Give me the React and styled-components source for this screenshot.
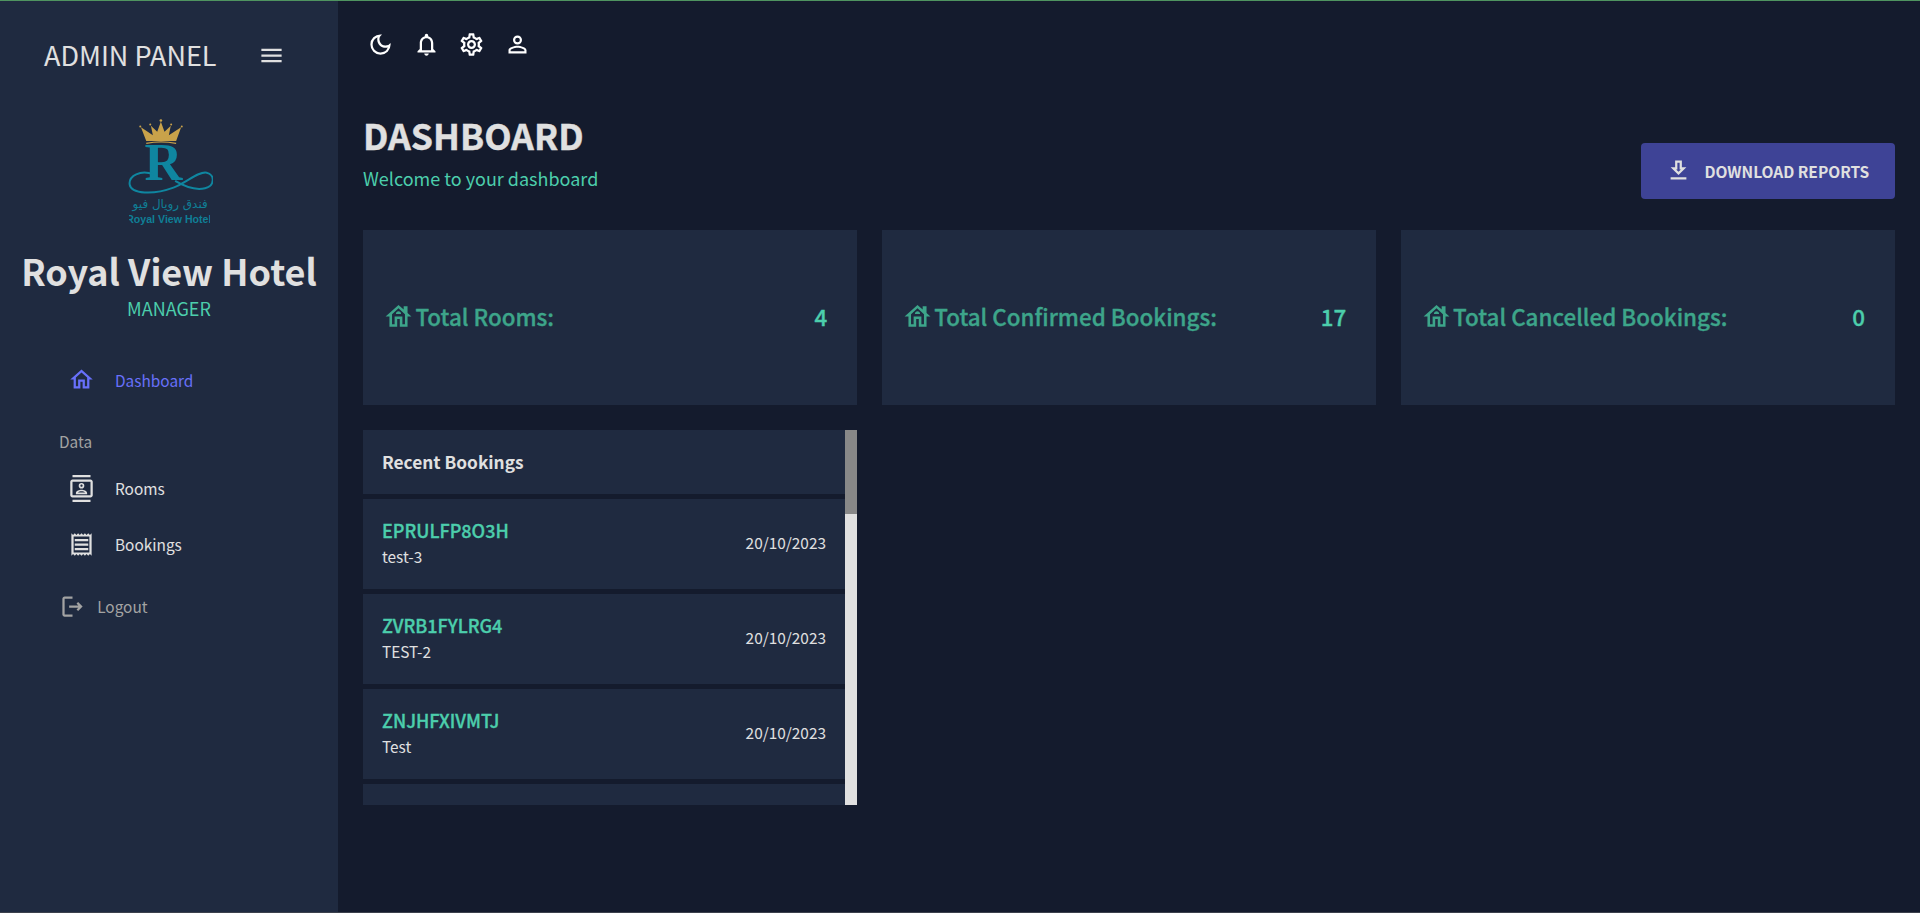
import styled, { createGlobalStyle } from "styled-components";
import {
  MdOutlineMenu,
  MdOutlineHome,
  MdOutlineContacts,
  MdOutlineReceipt,
  MdOutlineLogout,
  MdOutlineDarkMode,
  MdOutlineNotifications,
  MdOutlineSettings,
  MdOutlinePersonOutline,
  MdOutlineDownload,
  MdOutlineHouse,
} from "react-icons/md";

const GlobalStyle = createGlobalStyle`
  * { box-sizing: border-box; }
  html, body { margin: 0; padding: 0; height: 100%; background: #141b2d; }
  body {
    font-family: "Noto Sans CJK SC", "Noto Sans", sans-serif;
    color: #e0e0e0;
    overflow: hidden;
  }
`;

const stats = [
  { label: "Total Rooms:", value: "4" },
  { label: "Total Confirmed Bookings:", value: "17" },
  { label: "Total Cancelled Bookings:", value: "0" },
];

const bookings = [
  { code: "EPRULFP8O3H", name: "test-3", date: "20/10/2023" },
  { code: "ZVRB1FYLRG4", name: "TEST-2", date: "20/10/2023" },
  { code: "ZNJHFXIVMTJ", name: "Test", date: "20/10/2023" },
  { code: "", name: "", date: "" },
];

function Logo() {
  return (
    <svg width="88" height="108" viewBox="44 24 265 324">
      <defs>
        <clipPath id="logo-latin">
          <rect x="56" y="310" width="244" height="36" />
        </clipPath>
      </defs>
      <g fill="#c9a24a">
        <path d="M92 48 L128 72 L122 44 L141 62 L152 32 L163 62 L182 44 L176 72 L213 48 L198 90 L108 90 Z" />
        <circle cx="152" cy="28" r="4" />
        <circle cx="120" cy="40" r="3" />
        <circle cx="183" cy="40" r="3" />
        <circle cx="90" cy="46" r="3" />
        <circle cx="215" cy="46" r="3" />
      </g>
      <path d="M108 97 Q152 88 198 97" fill="none" stroke="#c9a24a" strokeWidth="4" />
      <text x="160" y="208" textAnchor="middle" fontFamily="Liberation Serif" fontWeight="700" fontSize="158" fill="#0f86a0">R</text>
      <path d="M130 190 C90 175 55 195 58 220 C62 250 130 252 190 230 C230 215 265 180 290 185 C315 190 315 225 285 232 C250 240 220 225 195 210" fill="none" stroke="#0f86a0" strokeWidth="6" />
      <text x="180" y="290" textAnchor="middle" fontFamily="DejaVu Sans" fontSize="36" fill="#0f7f96" direction="rtl">فندق رويال فيو</text>
      <g clipPath="url(#logo-latin)">
        <text x="176" y="338" textAnchor="middle" fontFamily="Liberation Sans" fontWeight="700" fontSize="32" fill="#0f7f96">Royal View Hotel</text>
      </g>
    </svg>
  );
}

export default function App() {
  return (
    <>
      <GlobalStyle />
      <Page>
        <Sidebar>
          <Brand>
            <BrandName>ADMIN PANEL</BrandName>
            <MdOutlineMenu size={27} color="#e0e0e0" />
          </Brand>
          <LogoBox>
            <Logo />
          </LogoBox>
          <HotelName>Royal View Hotel</HotelName>
          <Role>MANAGER</Role>
          <Nav>
            <NavItem $active>
              <MdOutlineHome size={27} />
              <span>Dashboard</span>
            </NavItem>
            <NavGroup>Data</NavGroup>
            <NavItem>
              <MdOutlineContacts size={27} />
              <span>Rooms</span>
            </NavItem>
            <NavItem>
              <MdOutlineReceipt size={27} />
              <span>Bookings</span>
            </NavItem>
            <LogoutRow>
              <MdOutlineLogout size={27} />
              <span>Logout</span>
            </LogoutRow>
          </Nav>
        </Sidebar>
        <Main>
          <TopBar>
            <TopIcon><MdOutlineDarkMode size={27} /></TopIcon>
            <TopIcon><MdOutlineNotifications size={27} /></TopIcon>
            <TopIcon><MdOutlineSettings size={27} /></TopIcon>
            <TopIcon><MdOutlinePersonOutline size={27} /></TopIcon>
          </TopBar>
          <Heading>
            <HeadingText>
              <Title>DASHBOARD</Title>
              <Subtitle>Welcome to your dashboard</Subtitle>
            </HeadingText>
            <DownloadButton>
              <MdOutlineDownload size={27} />
              DOWNLOAD REPORTS
            </DownloadButton>
          </Heading>
          <Cards>
            {stats.map((s) => (
              <Card key={s.label}>
                <CardLabel>
                  <MdOutlineHouse size={31} />
                  {s.label}
                </CardLabel>
                <CardValue>{s.value}</CardValue>
              </Card>
            ))}
          </Cards>
          <Recent>
            <RecentHeader>Recent Bookings</RecentHeader>
            {bookings.map((b, i) => (
              <BookingRow key={i}>
                <div>
                  <BookingCode>{b.code}</BookingCode>
                  <BookingName>{b.name}</BookingName>
                </div>
                <BookingDate>{b.date}</BookingDate>
              </BookingRow>
            ))}
            <ScrollTrack>
              <ScrollThumb />
            </ScrollTrack>
          </Recent>
        </Main>
      </Page>
    </>
  );
}

const Page = styled.div`
  display: flex;
  height: 100vh;
  border-top: 1px solid #4f9460;
  border-bottom: 1px solid #3c414d;
  background: #141b2d;
`;

const Sidebar = styled.aside`
  width: 338px;
  flex-shrink: 0;
  background: #1f2a40;
  display: flex;
  flex-direction: column;
`;

const Brand = styled.div`
  display: flex;
  align-items: center;
  height: 38px;
  margin-top: 35px;
  padding-left: 44px;
  gap: 41.5px;
`;

const BrandName = styled.div`
  font-size: 27px;
  line-height: 38px;
  color: #e0e0e0;
  font-weight: 400;
`;

const LogoBox = styled.div`
  display: flex;
  justify-content: center;
  margin-top: 45px;
`;

const HotelName = styled.div`
  margin-top: 21px;
  font-size: 36px;
  line-height: 44px;
  font-weight: 700;
  text-align: center;
`;

const Role = styled.div`
  font-size: 18px;
  line-height: 26px;
  color: #4cceac;
  text-align: center;
  margin-top: 2.5px;
`;

const Nav = styled.nav`
  margin-top: 31.3px;
  display: flex;
  flex-direction: column;
`;

const NavItem = styled.div`
  display: flex;
  align-items: center;
  height: 56px;
  padding-left: 67.5px;
  gap: 20.5px;
  font-size: 15.4px;
  color: ${(p) => (p.$active ? "#6870fa" : "#e0e0e0")};
`;

const NavGroup = styled.div`
  padding-left: 59px;
  margin-top: 21.6px;
  margin-bottom: 6.9px;
  font-size: 15.4px;
  line-height: 24px;
  color: #a3a3a3;
`;

const LogoutRow = styled.div`
  display: flex;
  align-items: center;
  height: 40px;
  margin-top: 14px;
  padding-left: 59px;
  gap: 11.2px;
  font-size: 15.4px;
  color: #a3a3a3;
`;

const Main = styled.main`
  flex: 1;
  min-width: 0;
  padding: 0 25px;
  display: flex;
  flex-direction: column;
`;

const TopBar = styled.div`
  display: flex;
  gap: 18.7px;
  padding-top: 29.5px;
  padding-left: 4px;
`;

const TopIcon = styled.span`
  display: flex;
  color: #fff;
`;

const Heading = styled.div`
  display: flex;
  justify-content: space-between;
  align-items: flex-end;
  margin-top: 55.1px;
`;

const HeadingText = styled.div`
  padding-bottom: 8.4px;
`;

const Title = styled.div`
  font-size: 35.6px;
  line-height: 44px;
  font-weight: 700;
  color: #e0e0e0;
  -webkit-text-stroke: 0.4px #e0e0e0;
`;

const Subtitle = styled.div`
  font-size: 18px;
  line-height: 26px;
  color: #4cceac;
  margin-top: 8px;
`;

const DownloadButton = styled.div`
  display: flex;
  align-items: center;
  gap: 12px;
  width: 254px;
  height: 56px;
  padding-left: 24.4px;
  border-radius: 4px;
  background: #3e4396;
  color: #e0e0e0;
  font-size: 15.5px;
  font-weight: 700;
`;

const Cards = styled.div`
  display: grid;
  grid-template-columns: repeat(3, 1fr);
  gap: 24.5px;
  margin-top: 31px;
`;

const Card = styled.div`
  height: 175px;
  background: #1f2a40;
  display: flex;
  align-items: center;
  justify-content: space-between;
  padding: 0 30px 2.6px 20.4px;
`;

const CardLabel = styled.div`
  display: flex;
  align-items: center;
  gap: 1px;
  font-size: 22.4px;
  font-weight: 500;
  color: #3da58a;
  -webkit-text-stroke: 0.35px #3da58a;
`;

const CardValue = styled.div`
  font-size: 22.4px;
  font-weight: 500;
  color: #4cceac;
  -webkit-text-stroke: 0.35px #4cceac;
`;

const Recent = styled.section`
  position: relative;
  width: 494px;
  height: 375px;
  margin-top: 25px;
  overflow: hidden;
  padding-right: 12px;
  display: flex;
  flex-direction: column;
  gap: 5px;
`;

const RecentHeader = styled.div`
  height: 64px;
  flex-shrink: 0;
  background: #1f2a40;
  display: flex;
  align-items: center;
  padding-left: 19px;
  font-size: 17.3px;
  font-weight: 700;
  color: #e0e0e0;
`;

const BookingRow = styled.div`
  height: 90px;
  flex-shrink: 0;
  background: #1f2a40;
  display: flex;
  align-items: center;
  justify-content: space-between;
  padding: 0 19px 3px;
`;

const BookingCode = styled.div`
  font-size: 18px;
  line-height: 26px;
  font-weight: 500;
  color: #4cceac;
  -webkit-text-stroke: 0.35px #4cceac;
`;

const BookingName = styled.div`
  font-size: 15.4px;
  line-height: 24px;
  margin-top: 1px;
  color: #e0e0e0;
`;

const BookingDate = styled.div`
  font-size: 15.4px;
  color: #e0e0e0;
`;

const ScrollTrack = styled.div`
  position: absolute;
  top: 0;
  right: 0;
  bottom: 0;
  width: 12px;
  background: #e0e0e0;
`;

const ScrollThumb = styled.div`
  height: 84px;
  background: #888;
`;
